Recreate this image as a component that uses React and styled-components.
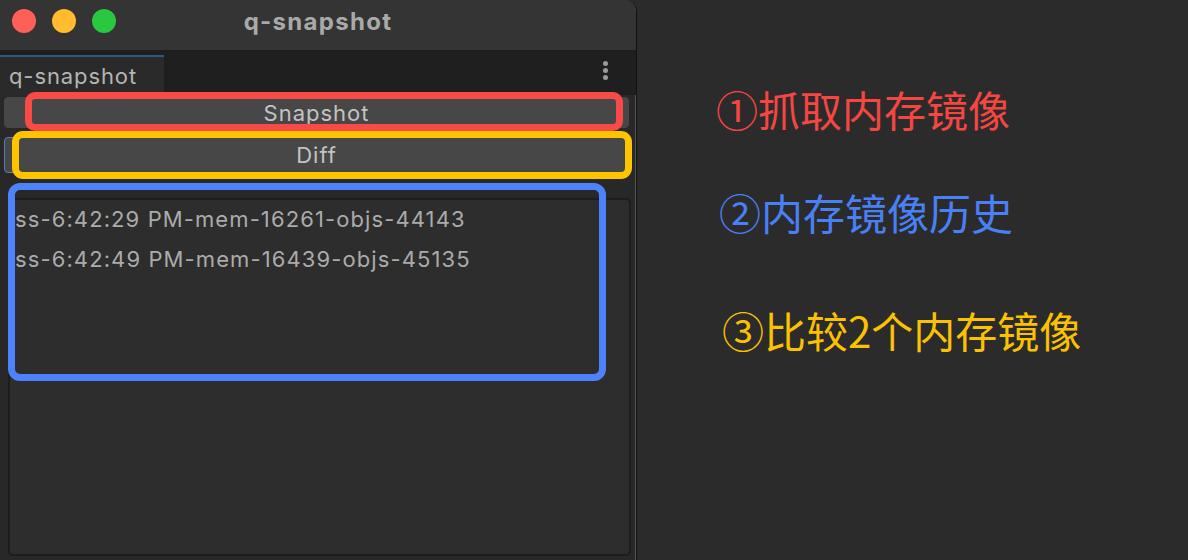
import React from "react";
import styled, { createGlobalStyle } from "styled-components";

const GlobalStyle = createGlobalStyle`
  html, body {
    margin: 0;
    padding: 0;
    background: #2b2b2b;
  }
  body {
    font-family: Inter, "Noto Sans", "Liberation Sans", sans-serif;
  }
`;

const Page = styled.div`
  display: flex;
  width: 1188px;
  height: 560px;
  overflow: hidden;
  background: #2b2b2b;
`;

const Window = styled.div`
  position: relative;
  width: 636px;
  height: 560px;
  display: flex;
  flex-direction: column;
  background: #282828;
  border-top-right-radius: 12px;
  box-shadow: inset -1px 0 0 #5a5a5a, 1px 0 0 #111;
  overflow: hidden;
  flex-shrink: 0;
`;

const TitleBar = styled.div`
  position: relative;
  height: 50px;
  background: #343434;
  display: flex;
  align-items: center;
  justify-content: center;
`;

const Lights = styled.div`
  position: absolute;
  left: 12px;
  top: 9px;
  display: flex;
  gap: 16px;
`;

const Light = styled.span`
  width: 24px;
  height: 24px;
  border-radius: 50%;
  background: ${(p) => p.color};
`;

const Title = styled.div`
  font-size: 24px;
  font-weight: 700;
  letter-spacing: 1.3px;
  color: #a9a9a9;
  margin-top: -8px;
`;

const TabBar = styled.div`
  height: 45px;
  background: #1f1f1f;
  display: flex;
  align-items: flex-end;
  justify-content: space-between;
  padding-right: 28px;
`;

const Tab = styled.div`
  width: 164px;
  height: 40px;
  box-sizing: border-box;
  border-top: 2px solid #2d5882;
  background: #2a2a2a;
  color: #b5b5b5;
  font-size: 22px;
  letter-spacing: 0.9px;
  padding-left: 9px;
  line-height: 38px;
`;

const Kebab = styled.div`
  display: flex;
  flex-direction: column;
  gap: 2px;
  align-self: flex-start;
  margin-top: 11px;
`;

const Dot = styled.span`
  width: 5px;
  height: 5px;
  border-radius: 50%;
  background: #9a9a9a;
`;

const Body = styled.div`
  flex: 1;
  display: flex;
  flex-direction: column;
  padding: 2px 7px 4px 4px;
  box-sizing: border-box;
`;

const Button = styled.div`
  height: ${(p) => p.h}px;
  margin-top: ${(p) => p.mt}px;
  box-sizing: border-box;
  background: #474747;
  border-radius: 4px;
  border: 1px solid ${(p) => (p.focused ? "#4f7fc0" : "#474747")};
  color: #c3c3c3;
  font-size: 22px;
  letter-spacing: 1px;
  display: flex;
  align-items: center;
  justify-content: center;
`;

const List = styled.div`
  flex: 1;
  margin: 25px -2px 0 4px;
  background: #2d2d2d;
  border: 2px solid #1d1d1d;
  border-radius: 5px;
  display: flex;
  flex-direction: column;
`;

const Item = styled.div`
  height: 40px;
  line-height: 38px;
  padding-left: 5px;
  color: #ababab;
  font-size: 22px;
  letter-spacing: 1.1px;
  white-space: nowrap;
`;

const Mark = styled.div`
  position: absolute;
  left: ${(p) => p.x}px;
  top: ${(p) => p.y}px;
  width: ${(p) => p.w}px;
  height: ${(p) => p.h}px;
  box-sizing: border-box;
  border: 7px solid ${(p) => p.color};
  border-radius: ${(p) => p.r}px;
  pointer-events: none;
`;

const Notes = styled.div`
  display: flex;
  flex-direction: column;
  padding: 84px 0 0 80px;
  font-family: "Noto Sans CJK SC", "Noto Sans", sans-serif;
  font-size: 42px;
`;

const Note = styled.div`
  color: ${(p) => p.color};
  margin-top: ${(p) => p.mt}px;
  margin-left: ${(p) => p.ml}px;
  line-height: 50px;
`;

const items = [
  "ss-6:42:29 PM-mem-16261-objs-44143",
  "ss-6:42:49 PM-mem-16439-objs-45135",
];

export default function App() {
  return (
    <Page>
      <GlobalStyle />
      <Window>
        <TitleBar>
          <Lights>
            <Light color="#fe5f57" />
            <Light color="#febc2e" />
            <Light color="#28c840" />
          </Lights>
          <Title>q-snapshot</Title>
        </TitleBar>
        <TabBar>
          <Tab>q-snapshot</Tab>
          <Kebab>
            <Dot />
            <Dot />
            <Dot />
          </Kebab>
        </TabBar>
        <Body>
          <Button h={31} mt={0}>Snapshot</Button>
          <Button h={36} mt={9} focused>Diff</Button>
          <List>
            {items.map((t) => (
              <Item key={t}>{t}</Item>
            ))}
          </List>
        </Body>
        <Mark x={25} y={92} w={598} h={39} r={10} color="#f84b48" />
        <Mark x={12} y={131} w={620} h={48} r={11} color="#ffc400" />
        <Mark x={8} y={183} w={598} h={198} r={12} color="#4d82fa" />
      </Window>
      <Notes>
        <Note color="#f54642" mt={0} ml={0}>①抓取内存镜像</Note>
        <Note color="#4a80f6" mt={53} ml={3}>②内存镜像历史</Note>
        <Note color="#fcc100" mt={68} ml={6}>③比较2个内存镜像</Note>
      </Notes>
    </Page>
  );
}
